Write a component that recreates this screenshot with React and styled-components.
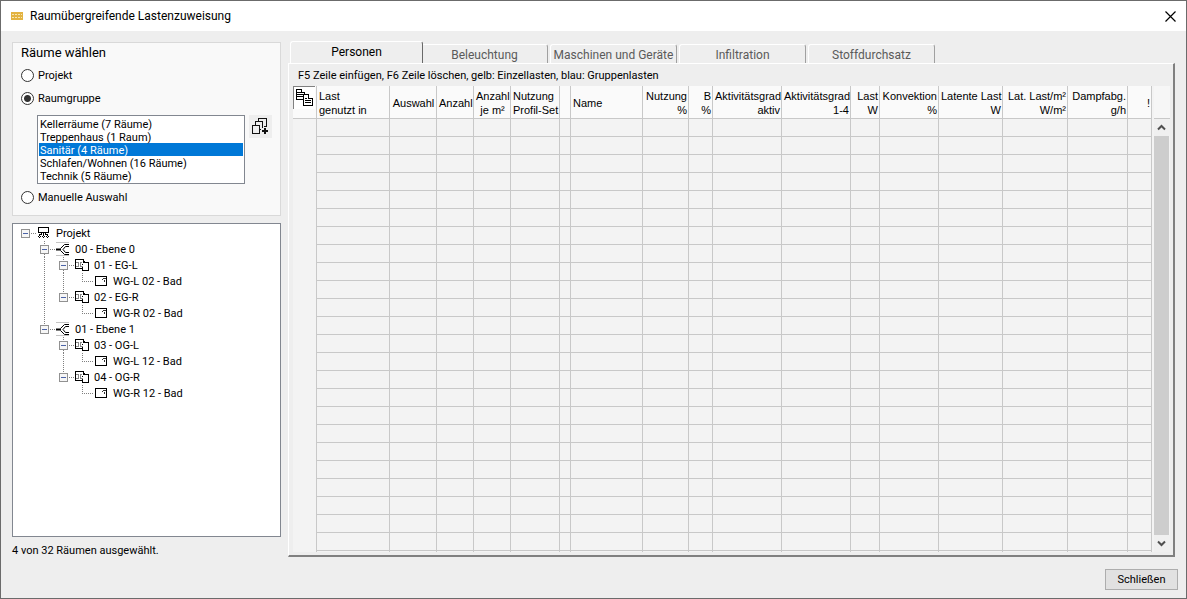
import React, { useState } from 'react';
import styled, { createGlobalStyle } from 'styled-components';

const ROOM_GROUPS = [
  'Kellerräume (7 Räume)',
  'Treppenhaus (1 Raum)',
  'Sanitär (4 Räume)',
  'Schlafen/Wohnen (16 Räume)',
  'Technik (5 Räume)',
];

// guides: one entry per indent level, true draws the vertical line
const TREE = [
  { label: 'Projekt', icon: 'project', guides: [] },
  { label: '00 - Ebene 0', icon: 'level', guides: [false], up: true, down: true },
  { label: '01 - EG-L', icon: 'unit', guides: [false, true], up: true, down: true },
  { label: 'WG-L 02 - Bad', icon: 'room', guides: [false, true, true], leaf: true },
  { label: '02 - EG-R', icon: 'unit', guides: [false, true], up: true },
  { label: 'WG-R 02 - Bad', icon: 'room', guides: [false, true, false], leaf: true },
  { label: '01 - Ebene 1', icon: 'level', guides: [false], up: true },
  { label: '03 - OG-L', icon: 'unit', guides: [false, false], up: true, down: true },
  { label: 'WG-L 12 - Bad', icon: 'room', guides: [false, false, true], leaf: true },
  { label: '04 - OG-R', icon: 'unit', guides: [false, false], up: true },
  { label: 'WG-R 12 - Bad', icon: 'room', guides: [false, false, false], leaf: true },
];

const TABS = ['Personen', 'Beleuchtung', 'Maschinen und Geräte', 'Infiltration', 'Stoffdurchsatz'];

const COLUMNS = [
  { lines: ['Last', 'genutzt in'], width: 73 },
  { lines: ['Auswahl'], width: 47, align: 'center' },
  { lines: ['Anzahl'], width: 37, align: 'center' },
  { lines: ['Anzahl', 'je m²'], width: 37, align: 'center' },
  { lines: ['Nutzung', 'Profil-Set'], width: 49 },
  { lines: [], width: 11 },
  { lines: ['Name'] },
  { lines: ['Nutzung', '%'], width: 46, align: 'right' },
  { lines: ['B', '%'], width: 24, align: 'right' },
  { lines: ['Aktivitätsgrad', 'aktiv'], width: 69, align: 'right' },
  { lines: ['Aktivitätsgrad', '1-4'], width: 69, align: 'right' },
  { lines: ['Last', 'W'], width: 29, align: 'right' },
  { lines: ['Konvektion', '%'], width: 59, align: 'right' },
  { lines: ['Latente Last', 'W'], width: 64, align: 'right' },
  { lines: ['Lat. Last/m²', 'W/m²'], width: 65, align: 'right' },
  { lines: ['Dampfabg.', 'g/h'], width: 60, align: 'right' },
  { lines: ['!'], width: 24, align: 'right' },
];

const ROWS = Array.from({ length: 25 }, (_, i) => i);

const CopyIcon = () => (
  <svg width="20" height="20" viewBox="0 0 20 20" fill="#fff" stroke="#000" shapeRendering="crispEdges">
    <path d="M1.500 1.500h5l3 3v7h-8z" />
    <path d="M6.500 1.500v3h3M2 4.500h4M2 6.500h6M2 8.500h6" />
    <path d="M8.500 6.500h5l4 4v7h-9z" />
    <path d="M13.500 6.500v4h4M10 10.500h2M10 12.500h6M10 14.500h6" />
  </svg>
);

const AddGroupIcon = () => (
  <svg width="17" height="17" viewBox="0 0 17 17" fill="none" stroke="#111" shapeRendering="crispEdges">
    <path d="M0.500 7.500h7v8h-7z" />
    <path d="M3.500 7v-3.500h7v6M8 11.500h1" />
    <path d="M6.500 3v-2.500h8v8h-3" />
    <path d="M10 12.500h6M10 13.500h6M12.500 10v6M13.500 10v6" />
  </svg>
);

const icons = {
  project: (
    <>
      <path d="M1.500 2.500h10v5h-10z" fill="none" stroke="#000" />
      <path d="M6.500 8v3M4.500 8v2M8.500 8v2M2.500 11v-1.500h2M8 9.500h2.500v1.500" fill="none" stroke="#000" />
      <path d="M1 11h1v1h-1zM3 11h1v1h-1zM2 12h1v1h-1zM5 11h1v1h-1zM7 11h1v1h-1zM6 12h1v1h-1zM9 11h1v1h-1zM11 11h1v1h-1zM10 12h1v1h-1z" fill="#000" />
    </>
  ),
  level: (
    <>
      <path d="M0 1.500h13M0 14.500h13" stroke="#c4c4c4" />
      <path d="M0 8.500h5" stroke="#000" strokeWidth="2" shapeRendering="auto" />
      <path
        d="M4.500 7.500l4-4h4.500M7 8.500l2.500-3h3.500M4.500 9.500l4 4h4.500M7 8.500l2.500 3h3.500"
        fill="none"
        stroke="#000"
        shapeRendering="auto"
      />
    </>
  ),
  unit: (
    <>
      <path d="M0.500 2.500h8v3h5v8h-6v-2h-7z" fill="#fff" stroke="#000" />
      <path d="M3 5.500h-2M3.500 5v5M1 9.500h2M7 5.500h-1.500v4h2" fill="none" stroke="#888" />
      <path d="M8.500 2v4M9.500 4v2M7.500 7v1M7.500 10v4" fill="none" stroke="#000" />
    </>
  ),
  room: (
    <>
      <path d="M1.500 3.500h11v9h-11z" fill="#fff" stroke="#000" />
      <path d="M9 5.500h3M8.500 6v1M10.500 7v2" fill="none" stroke="#333" />
    </>
  ),
};

const TreeIcon = ({ name }) => (
  <svg width="14" height="16" viewBox="0 0 14 16" shapeRendering="crispEdges">
    {icons[name]}
  </svg>
);

const Guide = ({ visible }) => (
  <svg width="19" height="16" viewBox="0 0 19 16" shapeRendering="crispEdges">
    {visible && <path d="M4.500 0v16" stroke="#808080" strokeDasharray="1 1" />}
  </svg>
);

const Branch = ({ up, down, leaf }) => (
  <svg width="16" height="16" viewBox="0 0 16 16" fill="none" stroke="#808080" shapeRendering="crispEdges">
    {leaf ? (
      <path d="M4.500 0v8.500h12" strokeDasharray="1 1" />
    ) : (
      <>
        {up && <path d="M4.500 0v4" strokeDasharray="1 1" />}
        {down && <path d="M4.500 13v3" strokeDasharray="1 1" />}
        <path d="M10 8.500h6" strokeDasharray="1 1" />
        <rect x="0.500" y="4.500" width="8" height="8" fill="#f6f6f6" stroke="#919191" />
        <path d="M2 8.500h5" stroke="#4b63a7" />
      </>
    )}
  </svg>
);

const Chevron = ({ down }) => (
  <svg width="9" height="7" viewBox="0 0 9 7" fill="none" stroke="#505050" strokeWidth="2">
    <path d={down ? 'M1 1.500l3.500 3.500 3.500-3.500' : 'M1 5.500l3.500-3.500 3.500 3.500'} />
  </svg>
);

const App = () => {
  const [mode, setMode] = useState('group');
  const [group, setGroup] = useState(ROOM_GROUPS[2]);
  const [tab, setTab] = useState(TABS[0]);

  return (
    <>
      <GlobalStyle />
      <Window>
        <TitleBar>
          <svg width="12" height="8" viewBox="0 0 12 8" shapeRendering="crispEdges">
            <rect width="12" height="8" fill="#e3b341" />
            <path d="M1 2.500h10M1 5.500h10" stroke="#f8e6b4" strokeDasharray="2 1" />
          </svg>
          <Title>Raumübergreifende Lastenzuweisung</Title>
          <CloseButton type="button" aria-label="Schließen">
            <svg width="11" height="11" viewBox="0 0 11 11" stroke="#000" strokeWidth="1.200">
              <path d="M0.500 0.500l10 10M10.500 0.500l-10 10" />
            </svg>
          </CloseButton>
        </TitleBar>

        <Body>
          <Sidebar>
            <RoomPicker>
              <Heading>Räume wählen</Heading>
              <RadioLabel>
                <Radio name="mode" checked={mode === 'project'} onChange={() => setMode('project')} />
                Projekt
              </RadioLabel>
              <RadioLabel>
                <Radio name="mode" checked={mode === 'group'} onChange={() => setMode('group')} />
                Raumgruppe
              </RadioLabel>
              <GroupRow>
                <GroupList size={5} aria-label="Raumgruppe" value={group} onChange={(e) => setGroup(e.target.value)}>
                  {ROOM_GROUPS.map((name) => (
                    <option key={name}>{name}</option>
                  ))}
                </GroupList>
                <IconButton type="button" aria-label="Raumgruppe hinzufügen">
                  <AddGroupIcon />
                </IconButton>
              </GroupRow>
              <RadioLabel>
                <Radio name="mode" checked={mode === 'manual'} onChange={() => setMode('manual')} />
                Manuelle Auswahl
              </RadioLabel>
            </RoomPicker>

            <Tree>
              {TREE.map((node) => (
                <TreeRow key={node.label}>
                  {node.guides.map((visible, i) => (
                    <Guide key={i} visible={visible} />
                  ))}
                  <Branch up={node.up} down={node.down} leaf={node.leaf} />
                  <TreeIcon name={node.icon} />
                  <TreeLabel>{node.label}</TreeLabel>
                </TreeRow>
              ))}
            </Tree>
            <Status>4 von 32 Räumen ausgewählt.</Status>
          </Sidebar>

          <Main>
            <TabList role="tablist">
              {TABS.map((name) => (
                <Tab key={name} type="button" role="tab" aria-selected={tab === name} $active={tab === name} onClick={() => setTab(name)}>
                  {name}
                </Tab>
              ))}
            </TabList>
            <Panel>
              <Hint>F5 Zeile einfügen, F6 Zeile löschen, gelb: Einzellasten, blau: Gruppenlasten</Hint>
              <GridArea>
                <GridViewport>
                  <Grid>
                    <colgroup>
                      <Col $width={24} />
                      {COLUMNS.map((col, i) => (
                        <Col key={i} $width={col.width} />
                      ))}
                    </colgroup>
                    <thead>
                      <tr>
                        <CornerCell>
                          <CopyButton type="button" aria-label="Kopieren">
                            <CopyIcon />
                          </CopyButton>
                        </CornerCell>
                        {COLUMNS.map((col, i) => (
                          <HeadCell key={i} $align={col.align}>
                            {col.lines.map((line) => (
                              <HeadLine key={line}>{line}</HeadLine>
                            ))}
                          </HeadCell>
                        ))}
                      </tr>
                    </thead>
                    <tbody>
                      {ROWS.map((row) => (
                        <tr key={row}>
                          <RowHead />
                          {COLUMNS.map((_, i) => (
                            <Cell key={i} />
                          ))}
                        </tr>
                      ))}
                    </tbody>
                  </Grid>
                </GridViewport>
                <ScrollColumn>
                  <ScrollHead />
                  <ScrollButton type="button" aria-label="Nach oben">
                    <Chevron />
                  </ScrollButton>
                  <ScrollThumb />
                  <ScrollButton type="button" aria-label="Nach unten">
                    <Chevron down />
                  </ScrollButton>
                </ScrollColumn>
              </GridArea>
            </Panel>
          </Main>
        </Body>

        <Footer>
          <FooterButton type="button">Schließen</FooterButton>
        </Footer>
      </Window>
    </>
  );
};

export default App;

const GlobalStyle = createGlobalStyle`
  * {
    box-sizing: border-box;
  }

  body {
    margin: 0;
    color: #000;
    font: 11px/14px Tahoma, Roboto, sans-serif;
  }

  button, select {
    font: inherit;
    color: inherit;
  }

  svg {
    display: block;
    flex: none;
  }
`;

const Window = styled.div`
  display: flex;
  flex-direction: column;
  height: 100vh;
  background: #eee;
  border: 1px solid #6b6b6b;
`;

const TitleBar = styled.header`
  display: flex;
  align-items: center;
  gap: 7px;
  height: 30px;
  padding: 0 8px 0 10px;
  background: #fff;
`;

const Title = styled.h1`
  flex: 1;
  margin: 0;
  font: 12px/16px 'Segoe UI', Roboto, sans-serif;
`;

const CloseButton = styled.button`
  padding: 2px;
  border: 0;
  background: none;
`;

const Body = styled.div`
  display: flex;
  flex: 1;
  gap: 7px;
  min-height: 0;
  padding: 11px 11px 0;
`;

const Sidebar = styled.aside`
  display: flex;
  flex-direction: column;
  flex: none;
  width: 269px;
`;

const RoomPicker = styled.section`
  height: 174px;
  padding: 2px 8px;
  background: #f9f9f9;
  border: 1px solid #d9d9d9;
`;

const Heading = styled.h2`
  margin: 0 0 3px;
  font-size: 13px;
  line-height: 16px;
  font-weight: normal;
`;

const RadioLabel = styled.label`
  display: flex;
  align-items: center;
  gap: 4px;
  height: 23px;
`;

const Radio = styled.input.attrs({ type: 'radio' })`
  appearance: none;
  width: 13px;
  height: 13px;
  margin: 0;
  border: 1px solid #333;
  border-radius: 50%;
  background: #fff;

  &:checked {
    background: radial-gradient(#333 0 3px, #fff 4px);
  }
`;

const GroupRow = styled.div`
  display: flex;
  align-items: flex-start;
  gap: 4px;
  margin: 5px 0 2px;
  padding-left: 16px;
`;

const GroupList = styled.select`
  width: 208px;
  height: 69px;
  padding: 1px;
  overflow: hidden;
  background: #fff;
  border: 1px solid #828790;
  border-radius: 0;
  outline: 0;

  option {
    height: 13px;
    min-height: 13px;
    padding: 1px 1px 0;
    line-height: 12px;
    color: #000;
  }

  option:checked {
    background: linear-gradient(#0078d7, #0078d7);
    color: #fff;
    -webkit-text-fill-color: #fff;
  }
`;

const IconButton = styled.button`
  display: grid;
  place-items: center;
  width: 23px;
  height: 23px;
  padding: 0;
  border: 0;
  background: #eee;
`;

const Tree = styled.ul`
  flex: 1;
  margin: 7px 0;
  padding: 1px 8px;
  list-style: none;
  background: #fff;
  border: 1px solid #828790;
`;

const TreeRow = styled.li`
  display: flex;
  align-items: center;
  height: 16px;
`;

const TreeLabel = styled.span`
  padding: 2px 0 0 5px;
`;

const Status = styled.p`
  margin: 0;
  line-height: 13px;
`;

const Main = styled.main`
  display: flex;
  flex-direction: column;
  flex: 1;
  min-width: 0;
`;

const TabList = styled.div`
  display: flex;
  align-items: flex-end;
  height: 21px;
  padding-left: 2px;
`;

const Tab = styled.button`
  flex: none;
  width: ${({ $active }) => ($active ? 133 : 127)}px;
  height: ${({ $active }) => ($active ? 22 : 19)}px;
  margin-right: ${({ $active }) => ($active ? -2 : 2)}px;
  padding: ${({ $active }) => ($active ? '0 0 1px' : '2px 0 0')};
  border: solid;
  border-width: 1px 1px 0;
  border-color: #fff ${({ $active }) => ($active ? '#696969' : '#a0a0a0')} #fff #fff;
  border-radius: 3px 3px 0 0;
  background: #eee;
  color: ${({ $active }) => ($active ? '#000' : '#5a5a5a')};
  font: 12px/16px 'Segoe UI', Roboto, sans-serif;
  white-space: nowrap;
  z-index: ${({ $active }) => ($active ? 1 : 0)};
`;

const Panel = styled.section`
  display: flex;
  flex-direction: column;
  flex: 1;
  min-height: 0;
  padding: 5px 3px 3px 4px;
  border: solid;
  border-width: 1px 2px 2px 1px;
  border-color: #fff #808080 #808080 #fff;
`;

const Hint = styled.p`
  margin: 0 0 3px;
  padding-left: 5px;
`;

const GridArea = styled.div`
  display: flex;
  flex: 1;
  min-height: 0;
  background: #f3f3f3;
`;

const GridViewport = styled.div`
  flex: 1;
  min-width: 0;
  overflow: hidden;
`;

const Grid = styled.table`
  width: 100%;
  table-layout: fixed;
  border-collapse: separate;
  border-spacing: 0;
`;

const Col = styled.col`
  width: ${({ $width }) => ($width ? `${$width}px` : 'auto')};
`;

const HeadCell = styled.th`
  height: 33px;
  padding: 2px 1px 0 2px;
  border: solid #c8c8c8;
  border-width: 0 1px 1px 0;
  background: #fafafa;
  font-family: Tahoma, 'Liberation Sans', sans-serif;
  font-weight: normal;
  text-align: ${({ $align }) => $align || 'left'};
  white-space: nowrap;
`;

const HeadLine = styled.div`
  line-height: 14px;
`;

const CornerCell = styled(HeadCell)`
  padding: 0;
  vertical-align: top;
`;

const CopyButton = styled.button`
  display: block;
  padding: 1px 0 1px 1px;
  border: solid;
  border-width: 1px 0 0 1px;
  border-color: #808080;
  background: #fff;
`;

const Cell = styled.td`
  height: 18px;
  padding: 0;
  border: solid #c8c8c8;
  border-width: 0 1px 1px 0;
`;

const RowHead = styled(Cell)`
  border-bottom: 0;
`;

const ScrollColumn = styled.div`
  display: flex;
  flex-direction: column;
  width: 18px;
  padding-left: 2px;
`;

const ScrollHead = styled.div`
  flex: none;
  height: 33px;
  background: #f6f6f6;
  border-bottom: 1px solid #c8c8c8;
`;

const ScrollButton = styled.button`
  display: grid;
  place-items: center;
  flex: none;
  height: 17px;
  padding: 0 1px 0 0;
  border: 0;
  background: #f0f0f0;
`;

const ScrollThumb = styled.div`
  flex: 1;
  margin-right: 1px;
  background: #cdcdcd;
`;

const Footer = styled.footer`
  display: flex;
  justify-content: flex-end;
  padding: 12px 8px 8px;
`;

const FooterButton = styled.button`
  width: 73px;
  height: 21px;
  padding: 0;
  border: 1px solid #adadad;
  background: #e1e1e1;
`;
